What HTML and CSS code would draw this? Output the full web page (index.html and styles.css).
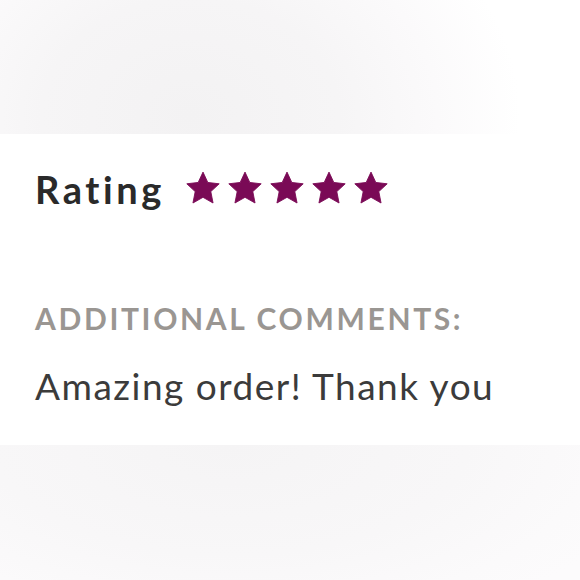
FILE: index.html
```html
<!DOCTYPE html>
<html>
<head>
<meta charset="utf-8">
<link rel="stylesheet" href="styles.css">
</head>
<body>
<div class="band band-top"></div>
<section class="review">
  <div class="rating-row">
    <h2 class="rating-label">Rating</h2>
    <div class="stars">
      <svg class="star" viewBox="0 0 24 24"><path d="M12 1.4l3.2 6.9 7.6.9-5.6 5.2 1.5 7.6L12 18.2l-6.7 3.8 1.5-7.6-5.6-5.2 7.6-.9z" stroke-linejoin="round"/></svg>
      <svg class="star" viewBox="0 0 24 24"><path d="M12 1.4l3.2 6.9 7.6.9-5.6 5.2 1.5 7.6L12 18.2l-6.7 3.8 1.5-7.6-5.6-5.2 7.6-.9z" stroke-linejoin="round"/></svg>
      <svg class="star" viewBox="0 0 24 24"><path d="M12 1.4l3.2 6.9 7.6.9-5.6 5.2 1.5 7.6L12 18.2l-6.7 3.8 1.5-7.6-5.6-5.2 7.6-.9z" stroke-linejoin="round"/></svg>
      <svg class="star" viewBox="0 0 24 24"><path d="M12 1.4l3.2 6.9 7.6.9-5.6 5.2 1.5 7.6L12 18.2l-6.7 3.8 1.5-7.6-5.6-5.2 7.6-.9z" stroke-linejoin="round"/></svg>
      <svg class="star" viewBox="0 0 24 24"><path d="M12 1.4l3.2 6.9 7.6.9-5.6 5.2 1.5 7.6L12 18.2l-6.7 3.8 1.5-7.6-5.6-5.2 7.6-.9z" stroke-linejoin="round"/></svg>
    </div>
  </div>
  <h3 class="comments-label">Additional comments:</h3>
  <p class="comments-text">Amazing order! Thank you</p>
</section>
<div class="band band-bottom"></div>
</body>
</html>
```

FILE: styles.css
```css
html, body {
  margin: 0;
  padding: 0;
  background: #ffffff;
}
body {
  width: 580px;
  height: 580px;
  overflow: hidden;
  font-family: Lato, "Liberation Sans", sans-serif;
  font-variant-ligatures: none;
}
.band {
  width: 100%;
}
.band-top {
  height: 134px;
  background: radial-gradient(ellipse 330px 260px at 190px 115px, #f3f2f3 0%, #f6f5f6 45%, #fbfafb 75%, #ffffff 100%);
}
.band-bottom {
  height: 135px;
  background: radial-gradient(ellipse 430px 200px at 230px 0px, #f5f4f5 0%, #f8f7f8 55%, #fbfafb 85%, #fcfbfc 100%);
}
.review {
  height: 311px;
  box-sizing: border-box;
  padding: 32px 0 0 35px;
}
.rating-row {
  display: flex;
  align-items: center;
  gap: 20px;
}
.rating-label {
  margin: 0;
  font-size: 38px;
  font-weight: 700;
  letter-spacing: 3.6px;
  color: #2a2a2a;
  line-height: 46px;
}
.stars {
  display: flex;
  gap: 6px;
  margin-top: -2px;
}
.star {
  width: 36px;
  height: 36px;
  fill: #7a0a56;
  stroke: #7a0a56;
  stroke-width: 0.6;
  display: block;
}
.comments-label {
  margin: 88px 0 0 0;
  font-size: 30px;
  font-weight: 700;
  text-transform: uppercase;
  letter-spacing: 2.65px;
  color: #9a9692;
  line-height: 36px;
}
.comments-text {
  margin: 28px 0 0 0;
  font-size: 37px;
  font-weight: 400;
  letter-spacing: 1.5px;
  color: #3b3b3b;
  line-height: 44px;
}
```
